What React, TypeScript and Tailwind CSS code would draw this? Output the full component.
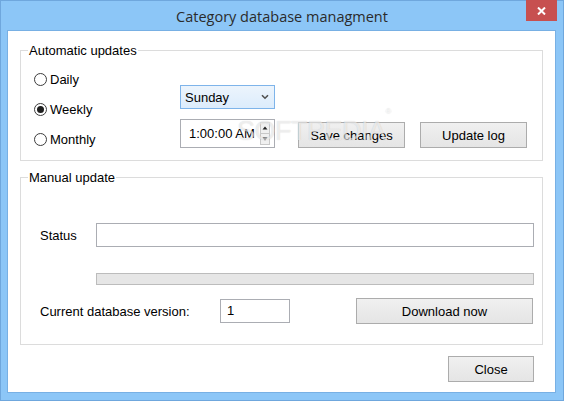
import React from "react";

function Radio({ label, checked }: { label: string; checked?: boolean }) {
  return (
    <div className="h-[20px] flex items-center">
      <div className="w-[13px] h-[13px] rounded-full border border-[#3c3c3c] bg-white flex items-center justify-center">
        {checked && <div className="w-[7px] h-[7px] rounded-full bg-[#1e1e1e]" />}
      </div>
      <span className="ml-[3px] leading-[15px]">{label}</span>
    </div>
  );
}

function Btn({ children, className }: { children: React.ReactNode; className: string }) {
  return (
    <div
      className={
        "h-[26px] border border-[#acacac] bg-gradient-to-b from-[#f0f0f0] to-[#e5e5e5] flex items-center justify-center leading-[15px] " +
        className
      }
    >
      {children}
    </div>
  );
}

export default function App() {
  return (
    <div className="relative w-[564px] h-[401px] bg-[#8cc6f7] border border-[#6fa7dd] flex flex-col font-['Liberation_Sans',Arial,sans-serif] text-[13px] text-black">
      {/* Title bar */}
      <div className="h-[29px] flex items-center justify-center pt-[2px] font-['Open_Sans','Noto_Sans',sans-serif] text-[14.5px] text-[#2b2b2b]">
        Category database managment
      </div>
      <div className="absolute top-[-1px] right-[6px] w-[31px] h-[21px] bg-[#c75050] flex items-center justify-center">
        <svg width="9" height="8" viewBox="0 0 9 8">
          <path d="M1 0.5 L8 7.5 M8 0.5 L1 7.5" stroke="white" strokeWidth="2" />
        </svg>
      </div>

      {/* Client area */}
      <div className="ml-[6px] mr-[7px] mb-[7px] flex-1 border border-[#78b0e4] bg-white flex flex-col pt-[19px] px-[12px]">
        {/* Automatic updates */}
        <div className="h-[111px] border border-[#dcdcdc] flex flex-col">
          <span className="self-start -mt-[8px] ml-[7px] px-[1px] bg-white h-[15px] leading-[15px]">
            Automatic updates
          </span>
          <div className="flex items-start">
            <div className="ml-[13px] mt-[11px] w-[146px] flex flex-col gap-[10px]">
              <Radio label="Daily" />
              <Radio label="Weekly" checked />
              <Radio label="Monthly" />
            </div>
            <div className="mt-[27px] flex flex-col">
              <div className="w-[95px] h-[24px] border border-[#7eb4ea] bg-gradient-to-b from-[#ecf4fc] to-[#dcecfc] flex items-center pl-[4px] pr-[4px]">
                <span className="flex-1 leading-[15px]">Sunday</span>
                <svg width="8" height="6" viewBox="0 0 8 6" className="mr-[1px]">
                  <path d="M1 1.2 L4 4.2 L7 1.2" stroke="#505050" strokeWidth="1.6" fill="none" />
                </svg>
              </div>
              <div className="mt-[10px] flex items-end">
                <div className="w-[95px] h-[29px] border border-[#abadb3] bg-white flex items-center pl-[8px] pr-[4px]">
                  <span className="flex-1 leading-[15px]">1:00:00 AM</span>
                  <div className="w-[10px] h-[23px] border border-[#c8c8c8] bg-[#f0f0f0] flex flex-col">
                    <div className="flex-1 flex items-center justify-center border-b border-[#c8c8c8]">
                      <svg width="6" height="4" viewBox="0 0 6 4">
                        <path d="M3 0.5 L5.5 3.5 L0.5 3.5 Z" fill="#222" />
                      </svg>
                    </div>
                    <div className="flex-1 flex items-center justify-center">
                      <svg width="6" height="4" viewBox="0 0 6 4">
                        <path d="M0.5 0.5 L5.5 0.5 L3 3.5 Z" fill="#222" />
                      </svg>
                    </div>
                  </div>
                </div>
                <Btn className="ml-[23px] w-[107px]">Save changes</Btn>
                <Btn className="ml-[15px] w-[107px]">Update log</Btn>
              </div>
            </div>
          </div>
        </div>

        {/* Manual update */}
        <div className="mt-[16px] h-[168px] border border-[#dcdcdc] flex flex-col">
          <span className="self-start -mt-[8px] ml-[7px] px-[1px] bg-white h-[15px] leading-[15px]">
            Manual update
          </span>
          <div className="pl-[19px] pr-[8px] flex flex-col">
            <div className="mt-[38px] flex items-center">
              <span className="w-[56px] leading-[15px]">Status</span>
              <div className="flex-1 h-[24px] border border-[#abadb3] bg-white" />
            </div>
            <div className="mt-[26px] ml-[56px] h-[12px] border border-[#bcbcbc] bg-[#e6e6e6]" />
            <div className="mt-[13px] h-[26px] flex items-center">
              <span className="w-[180px] leading-[15px]">Current database version:</span>
              <div className="w-[70px] h-[24px] border border-[#abadb3] bg-white flex items-center pl-[6px] pb-[2px]">
                <span className="leading-[15px]">1</span>
              </div>
              <Btn className="ml-auto mr-[1px] w-[177px]">Download now</Btn>
            </div>
          </div>
        </div>

        <Btn className="mt-[11px] self-end mr-[9px] w-[86px]">Close</Btn>
      </div>

      {/* Softpedia watermark */}
      <div className="pointer-events-none absolute left-[236px] top-[115px] text-[27px] tracking-[-0.5px] font-['Liberation_Sans',sans-serif] text-white/60 [text-shadow:0_0_1px_rgba(0,0,0,0.18)] leading-[30px]">
        SOFTPEDIA<sup className="text-[8px] align-top">®</sup>
      </div>
    </div>
  );
}
